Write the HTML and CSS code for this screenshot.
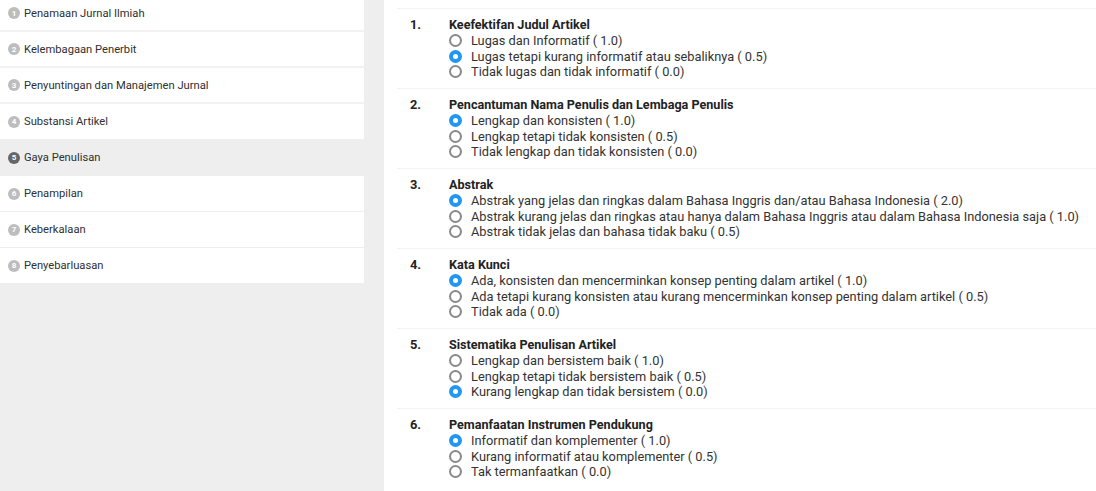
FILE: index.html
```html
<!DOCTYPE html>
<html lang="id">
<head>
<meta charset="utf-8">
<title>Penilaian Jurnal</title>
<link rel="stylesheet" href="styles.css">
</head>
<body>
<div class="page">
  <aside class="sidebar">
    <div class="nav-item thick"><span class="nav-num">1</span><span>Penamaan Jurnal Ilmiah</span></div>
    <div class="nav-item thick"><span class="nav-num">2</span><span>Kelembagaan Penerbit</span></div>
    <div class="nav-item thick"><span class="nav-num">3</span><span>Penyuntingan dan Manajemen Jurnal</span></div>
    <div class="nav-item"><span class="nav-num">4</span><span>Substansi Artikel</span></div>
    <div class="nav-item active"><span class="nav-num">5</span><span>Gaya Penulisan</span></div>
    <div class="nav-item"><span class="nav-num">6</span><span>Penampilan</span></div>
    <div class="nav-item"><span class="nav-num">7</span><span>Keberkalaan</span></div>
    <div class="nav-item"><span class="nav-num">8</span><span>Penyebarluasan</span></div>
  </aside>
  <main class="content">
    <div class="question">
      <div class="q-num">1.</div>
      <div class="q-body">
        <div class="q-title">Keefektifan Judul Artikel</div>
        <div class="option"><span class="radio"></span>Lugas dan Informatif ( 1.0)</div>
        <div class="option"><span class="radio checked"></span>Lugas tetapi kurang informatif atau sebaliknya ( 0.5)</div>
        <div class="option"><span class="radio"></span>Tidak lugas dan tidak informatif ( 0.0)</div>
      </div>
    </div>
    <div class="question">
      <div class="q-num">2.</div>
      <div class="q-body">
        <div class="q-title">Pencantuman Nama Penulis dan Lembaga Penulis</div>
        <div class="option"><span class="radio checked"></span>Lengkap dan konsisten ( 1.0)</div>
        <div class="option"><span class="radio"></span>Lengkap tetapi tidak konsisten ( 0.5)</div>
        <div class="option"><span class="radio"></span>Tidak lengkap dan tidak konsisten ( 0.0)</div>
      </div>
    </div>
    <div class="question">
      <div class="q-num">3.</div>
      <div class="q-body">
        <div class="q-title">Abstrak</div>
        <div class="option"><span class="radio checked"></span>Abstrak yang jelas dan ringkas dalam Bahasa Inggris dan/atau Bahasa Indonesia ( 2.0)</div>
        <div class="option"><span class="radio"></span>Abstrak kurang jelas dan ringkas atau hanya dalam Bahasa Inggris atau dalam Bahasa Indonesia saja ( 1.0)</div>
        <div class="option"><span class="radio"></span>Abstrak tidak jelas dan bahasa tidak baku ( 0.5)</div>
      </div>
    </div>
    <div class="question">
      <div class="q-num">4.</div>
      <div class="q-body">
        <div class="q-title">Kata Kunci</div>
        <div class="option"><span class="radio checked"></span>Ada, konsisten dan mencerminkan konsep penting dalam artikel ( 1.0)</div>
        <div class="option"><span class="radio"></span>Ada tetapi kurang konsisten atau kurang mencerminkan konsep penting dalam artikel ( 0.5)</div>
        <div class="option"><span class="radio"></span>Tidak ada ( 0.0)</div>
      </div>
    </div>
    <div class="question">
      <div class="q-num">5.</div>
      <div class="q-body">
        <div class="q-title">Sistematika Penulisan Artikel</div>
        <div class="option"><span class="radio"></span>Lengkap dan bersistem baik ( 1.0)</div>
        <div class="option"><span class="radio"></span>Lengkap tetapi tidak bersistem baik ( 0.5)</div>
        <div class="option"><span class="radio checked"></span>Kurang lengkap dan tidak bersistem ( 0.0)</div>
      </div>
    </div>
    <div class="question">
      <div class="q-num">6.</div>
      <div class="q-body">
        <div class="q-title">Pemanfaatan Instrumen Pendukung</div>
        <div class="option"><span class="radio checked"></span>Informatif dan komplementer ( 1.0)</div>
        <div class="option"><span class="radio"></span>Kurang informatif atau komplementer ( 0.5)</div>
        <div class="option"><span class="radio"></span>Tak termanfaatkan ( 0.0)</div>
      </div>
    </div>
  </main>
</div>
</body>
</html>
```

FILE: styles.css
```css
html, body {
  margin: 0;
  padding: 0;
  height: 100%;
  overflow: hidden;
}
body {
  background: #eeeeee;
  font-family: Roboto, "Liberation Sans", Arial, sans-serif;
  color: #333;
}
.page {
  display: flex;
  align-items: stretch;
  min-height: 100%;
}
.sidebar {
  width: 364px;
  flex: 0 0 364px;
  align-self: flex-start;
  background: #fff;
  margin-top: -4px;
  margin-right: 20px;
}
.nav-item {
  display: flex;
  align-items: center;
  height: 35px;
  padding-left: 8px;
  border-bottom: 1px solid #efefef;
  font-size: 11.2px;
  color: #303030;
}
.nav-item.thick {
  height: 34px;
  border-bottom: 2px solid #f2f2f2;
}
.nav-item:last-child {
  border-bottom: none;
}
.nav-item.active {
  background: #eeeeee;
}
.nav-num {
  width: 12px;
  height: 12px;
  border-radius: 50%;
  background: #bdbdbd;
  color: #fff;
  font-size: 8px;
  font-weight: 700;
  display: flex;
  align-items: center;
  justify-content: center;
  margin-right: 4px;
  flex: 0 0 12px;
}
.nav-item.active .nav-num {
  background: #666;
}
.content {
  flex: 1;
  background: #fff;
  padding: 8px 0 0 13px;
}
.question {
  display: grid;
  grid-template-columns: 39px 1fr;
  border-top: 1px solid #f3f3f3;
  padding: 8px 0 8.5px 13px;
}
.q-num {
  font-size: 12.8px;
  font-weight: 700;
  line-height: 16px;
  color: #222;
}
.q-title {
  font-size: 12.6px;
  font-weight: 700;
  line-height: 16px;
  color: #222;
}
.option {
  display: flex;
  align-items: center;
  font-size: 12.8px;
  line-height: 15.5px;
  height: 15.5px;
  color: #333;
  white-space: nowrap;
}
.radio {
  box-sizing: border-box;
  width: 13px;
  height: 13px;
  border-radius: 50%;
  border: 2px solid #8a8a8a;
  margin-right: 9px;
  flex: 0 0 13px;
  position: relative;
}
.radio.checked {
  border: none;
  background: #2196f3;
}
.radio.checked::after {
  content: "";
  position: absolute;
  left: 4px;
  top: 4px;
  width: 5px;
  height: 5px;
  border-radius: 50%;
  background: #fff;
}
```
